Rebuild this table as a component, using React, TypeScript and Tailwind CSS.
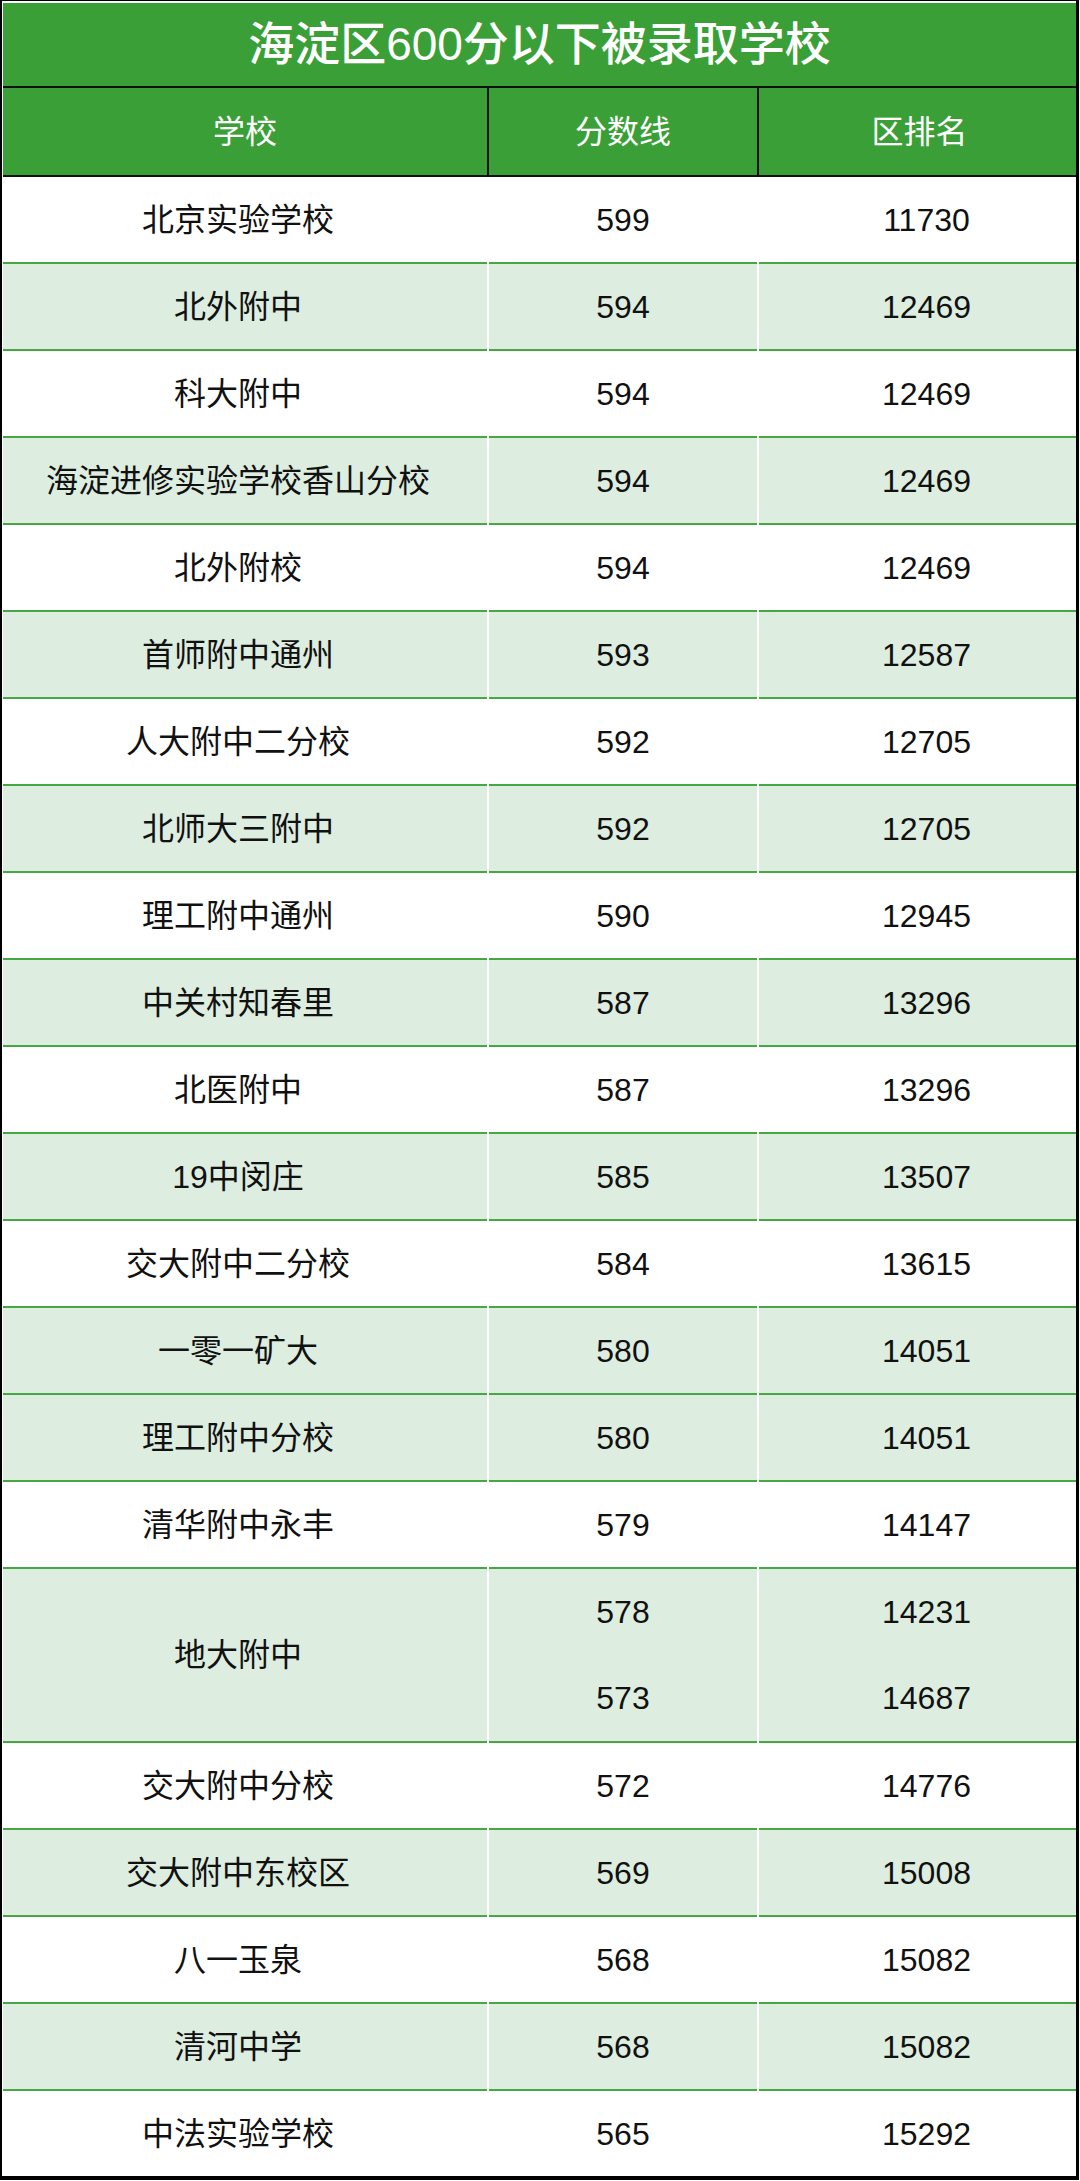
const rows: { name: string; scores: string[]; ranks: string[]; shaded: boolean }[] = [
  { name: '北京实验学校', scores: ['599'], ranks: ['11730'], shaded: false },
  { name: '北外附中', scores: ['594'], ranks: ['12469'], shaded: true },
  { name: '科大附中', scores: ['594'], ranks: ['12469'], shaded: false },
  { name: '海淀进修实验学校香山分校', scores: ['594'], ranks: ['12469'], shaded: true },
  { name: '北外附校', scores: ['594'], ranks: ['12469'], shaded: false },
  { name: '首师附中通州', scores: ['593'], ranks: ['12587'], shaded: true },
  { name: '人大附中二分校', scores: ['592'], ranks: ['12705'], shaded: false },
  { name: '北师大三附中', scores: ['592'], ranks: ['12705'], shaded: true },
  { name: '理工附中通州', scores: ['590'], ranks: ['12945'], shaded: false },
  { name: '中关村知春里', scores: ['587'], ranks: ['13296'], shaded: true },
  { name: '北医附中', scores: ['587'], ranks: ['13296'], shaded: false },
  { name: '19中闵庄', scores: ['585'], ranks: ['13507'], shaded: true },
  { name: '交大附中二分校', scores: ['584'], ranks: ['13615'], shaded: false },
  { name: '一零一矿大', scores: ['580'], ranks: ['14051'], shaded: true },
  { name: '理工附中分校', scores: ['580'], ranks: ['14051'], shaded: true },
  { name: '清华附中永丰', scores: ['579'], ranks: ['14147'], shaded: false },
  { name: '地大附中', scores: ['578', '573'], ranks: ['14231', '14687'], shaded: true },
  { name: '交大附中分校', scores: ['572'], ranks: ['14776'], shaded: false },
  { name: '交大附中东校区', scores: ['569'], ranks: ['15008'], shaded: true },
  { name: '八一玉泉', scores: ['568'], ranks: ['15082'], shaded: false },
  { name: '清河中学', scores: ['568'], ranks: ['15082'], shaded: true },
  { name: '中法实验学校', scores: ['565'], ranks: ['15292'], shaded: false },
]

const font = { fontFamily: '"Liberation Sans", "Noto Sans CJK SC", sans-serif' }

export default function App() {
  return (
    <div className="w-[1080px] bg-white" style={font}>
      <div className="w-[1079px] border-l-2 border-t border-r-[3px] border-b-4 border-black pt-[2px] pl-px">
        {/* title */}
        <div className="h-[83px] bg-[#3b9f37] flex items-center justify-center text-white text-[46px] font-medium">
          海淀区600分以下被录取学校
        </div>

        {/* header */}
        <div className="grid grid-cols-[484px_2px_268px_2px_1fr] bg-[#3b9f37] border-y-2 border-[#111] h-[91px] text-white text-[32px]">
          <div className="flex items-center justify-center">学校</div>
          <div className="bg-[#111]" />
          <div className="flex items-center justify-center">分数线</div>
          <div className="bg-[#111]" />
          <div className="flex items-center justify-center pl-[4px]">区排名</div>
        </div>

        {/* body */}
        {rows.map((r, i) => {
          const bg = r.shaded ? 'bg-[#ddede0]' : 'bg-white'
          const line = i === 0 ? 'border-t-0' : 'border-t-2 border-[#46a843]'
          const h = r.scores.length > 1 ? 'h-[174px]' : i === 0 ? 'h-[85px]' : 'h-[87px]'
          return (
            <div key={i} className={`grid grid-cols-[484px_268px_1fr] gap-x-[2px] bg-white ${h} text-[32px] text-[#111]`}>
              <div className={`${bg} ${line} flex items-center justify-center pr-[14px]`}>{r.name}</div>
              <div className={`${bg} ${line} flex flex-col`}>
                {r.scores.map((s) => (
                  <div key={s} className="flex-1 flex items-center justify-center">{s}</div>
                ))}
              </div>
              <div className={`${bg} ${line} flex flex-col`}>
                {r.ranks.map((s) => (
                  <div key={s} className="flex-1 flex items-center justify-center pl-[18px]">{s}</div>
                ))}
              </div>
            </div>
          )
        })}
      </div>
    </div>
  )
}
